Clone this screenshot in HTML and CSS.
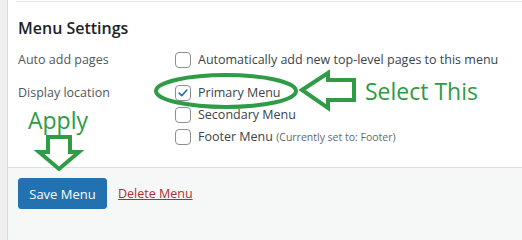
FILE: index.html
```html
<!DOCTYPE html>
<html lang="en">
<head>
<meta charset="utf-8">
<title>Menu Settings</title>
<link rel="stylesheet" href="styles.css">
</head>
<body>
<div class="page">
  <div class="panel">
    <div class="topline"></div>
    <div class="settings">
      <h3 class="title">Menu Settings</h3>
      <div class="row row-auto">
        <div class="label">Auto add pages</div>
        <div class="options">
          <label class="opt"><span class="cb"></span><span class="opt-text">Automatically add new top-level pages to this menu</span></label>
        </div>
      </div>
      <div class="row row-loc">
        <div class="label">Display location</div>
        <div class="options">
          <label class="opt"><span class="cb"><svg class="check" viewBox="0 0 16 16" width="14" height="14"><path d="M3.6 8.2 L6.6 11.1 L12.4 4.6" fill="none" stroke="#2271b1" stroke-width="1.9" stroke-linecap="round" stroke-linejoin="round"/></svg></span><span class="opt-text">Primary Menu</span></label>
          <label class="opt"><span class="cb"></span><span class="opt-text">Secondary Menu</span></label>
          <label class="opt"><span class="cb"></span><span class="opt-text">Footer Menu <span class="hint">(Currently set to: Footer)</span></span></label>
        </div>
      </div>
    </div>
    <div class="footer">
      <button class="btn" type="button">Save Menu</button>
      <a class="delete" href="#">Delete Menu</a>
    </div>
  </div>
  <svg class="annot" width="522" height="216" viewBox="0 0 522 216">
    <ellipse cx="226" cy="91" rx="70" ry="16" fill="none" stroke="#2e9b45" stroke-width="4"/>
    <polygon points="302,90 328,73 328,80 354,80 354,100 328,100 328,108" fill="none" stroke="#2e9b45" stroke-width="4" stroke-linejoin="miter"/>
    <polygon points="48,137 70,137 70,152 79,152 59,169 39,152 48,152" fill="none" stroke="#2e9b45" stroke-width="4" stroke-linejoin="miter"/>
  </svg>
  <span class="note note-select">Select This</span>
  <span class="note note-apply">Apply</span>
</div>
</body>
</html>
```
FILE: styles.css
```css
* { box-sizing: border-box; }
html, body { margin: 0; padding: 0; }
html { background: #f0f0f1; }
body {
  font-family: "Open Sans", "Noto Sans", sans-serif;
  min-height: 100vh;
}
.page {
  position: relative;
  min-height: 100vh;
  display: flex;
}
.panel {
  flex: 1;
  margin-left: 7px;
  min-height: 100vh;
  background: #fff;
  border-left: 1px solid #dcdcde;
  display: flex;
  flex-direction: column;
}
.topline {
  margin: 1px 0 0 8px;
  border-top: 1px solid #e2e4e7;
}
.settings {
  padding-left: 10px;
  height: 165px;
}
.title {
  margin: 16px 0 14px;
  font-size: 16px;
  line-height: 20px;
  font-weight: 600;
  color: #1d2327;
}
.row {
  display: grid;
  grid-template-columns: 157px 1fr;
}
.row-loc { margin-top: 17px; }
.label {
  font-size: 12.5px;
  line-height: 16px;
  color: #50575e;
}
.options {
  display: flex;
  flex-direction: column;
  gap: 6px;
}
.opt {
  display: flex;
  align-items: center;
  gap: 7px;
  font-size: 12.5px;
  line-height: 16px;
  color: #3c434a;
}
.cb {
  width: 16px;
  height: 16px;
  flex: none;
  border: 1px solid #8c8f94;
  border-radius: 4px;
  background: #fff;
  display: flex;
  align-items: center;
  justify-content: center;
}
.check { display: block; }
.hint {
  font-size: 10.5px;
  color: #646970;
}
.footer {
  flex: 1;
  background: #f6f7f7;
  border-top: 1px solid #dcdcde;
  padding: 10px 0 0 10px;
  display: flex;
  align-items: flex-start;
  gap: 11px;
}
.btn {
  height: 31px;
  width: 89px;
  padding: 0;
  border: 1px solid #2271b1;
  border-radius: 3px;
  background: #2271b1;
  color: #fff;
  font-family: inherit;
  font-size: 13px;
}
.delete {
  margin-top: 7px;
  font-size: 12.5px;
  line-height: 18px;
  color: #b32d2e;
  text-decoration: underline;
}
.annot {
  position: absolute;
  left: 0;
  top: 0;
  pointer-events: none;
}
.note {
  position: absolute;
  font-size: 23px;
  line-height: 28px;
  color: #2e9b45;
  white-space: nowrap;
}
.note-select { left: 365px; top: 77px; }
.note-apply { left: 28px; top: 106px; }
```
